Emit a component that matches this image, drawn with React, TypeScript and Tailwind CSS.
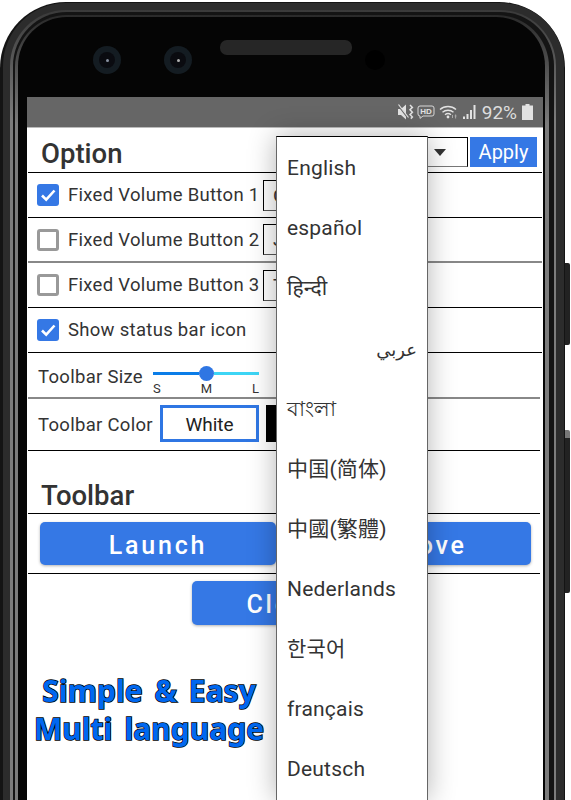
import React from "react";

const Check = () => (
  <svg width="22" height="22" viewBox="0 0 22 22" className="block">
    <path d="M5 11.5l4.2 4.2L17.5 6.5" fill="none" stroke="#fff" strokeWidth="2.6" />
  </svg>
);

function Box({ on }: { on: boolean }) {
  return on ? (
    <div className="w-[22px] h-[22px] rounded-[3px] bg-[#3578e5] shrink-0"><Check /></div>
  ) : (
    <div className="w-[22px] h-[22px] rounded-[3px] border-[3px] border-[#999] bg-white shrink-0" />
  );
}

function CheckRow({ label, on, value, cls }: { label: string; on: boolean; value?: string; cls: string }) {
  return (
    <div className={"h-[45px] mx-[1px] flex items-center pl-[9px] " + cls}>
      <Box on={on} />
      <div className="w-[204px] shrink-0 pl-[9px] pt-[2px] text-[18.5px] tracking-[0.3px] text-[#333] whitespace-nowrap">{label}</div>
      {value !== undefined && (
        <div className="w-[80px] h-[31px] border border-black border-b-[#555] pl-[9px] text-[19px] leading-[29px] text-[#333]">{value}</div>
      )}
    </div>
  );
}

const langs: { t: string; lang: string }[] = [
  { t: "English", lang: "en" },
  { t: "español", lang: "es" },
  { t: "हिन्दी", lang: "hi" },
  { t: "", lang: "ar" },
  { t: "বাংলা", lang: "bn" },
  { t: "中国(简体)", lang: "zh-CN" },
  { t: "中國(繁體)", lang: "zh-TW" },
  { t: "Nederlands", lang: "nl" },
  { t: "한국어", lang: "ko" },
  { t: "français", lang: "fr" },
  { t: "Deutsch", lang: "de" },
];

function StatusIcons() {
  return (
    <div className="h-[30px] flex items-center justify-end pr-[10px] bg-[#666] text-[#ddd]">
      <svg width="17" height="16" viewBox="0 0 17 16" className="mr-[3px]">
        <path d="M1 5h3l5-4.5v15L4 11H1z" fill="#e2e2e2" />
        <path d="M1 1l10 13" stroke="#666" strokeWidth="1.6" />
        <path d="M1.5 0.5l10 13" stroke="#e2e2e2" strokeWidth="1.2" />
        <path d="M13 1l2.4 2.4-2.4 2.4 2.4 2.4-2.4 2.4 2.4 2.4-1.6 1.6" fill="none" stroke="#e2e2e2" strokeWidth="1.5" />
      </svg>
      <svg width="18" height="14" viewBox="0 0 18 14" className="mr-[4px]">
        <path d="M3 1h12a2 2 0 012 2v6a2 2 0 01-2 2H6l-3 2.4V11a2 2 0 01-2-2V3a2 2 0 012-2z" fill="none" stroke="#d8d8d8" strokeWidth="1" />
        <text x="9" y="9" fontFamily="Liberation Sans" fontWeight="700" fontSize="8" fill="#e2e2e2" textAnchor="middle">HD</text>
      </svg>
      <svg width="20" height="15" viewBox="0 0 20 15" className="mr-[3px]">
        <path d="M1 4.5c4.4-4 11.6-4 16 0M3.5 7.2c3-2.6 8-2.6 11 0M6 9.8c1.7-1.4 4.3-1.4 6 0" fill="none" stroke="#e2e2e2" strokeWidth="1.4" />
        <circle cx="9" cy="12" r="1.4" fill="#e2e2e2" />
        <path d="M13.5 13v-3M15.7 11l1.8 0M16.6 9.5v4" stroke="#aaa" strokeWidth="1" />
      </svg>
      <svg width="15" height="16" viewBox="0 0 15 16" className="mr-[5px]">
        <path d="M1 12.5h2V15H1zM4.5 10h2v5h-2zM8 6h2v9H8zM11.5 1h2v14h-2z" fill="#e2e2e2" />
      </svg>
      <span className="text-[19px] leading-none mr-[5px]">92%</span>
      <svg width="11" height="16" viewBox="0 0 11 16">
        <path d="M3.5 0h4v1.5H11V16H0V1.5h3.5z" fill="#e2e2e2" />
      </svg>
    </div>
  );
}

export default function App() {
  return (
    <div className="relative w-[571px] h-[800px] overflow-hidden bg-white pt-[2px] flex font-['Roboto',sans-serif]">
      <div className="absolute left-[565px] top-[263px] w-[5px] h-[82px] bg-[#222] rounded-r-[2px]" />
      <div className="absolute left-[565px] top-[430px] w-[5px] h-[163px] bg-[#222] rounded-r-[2px] border-t-[8px] border-[#777]" />
      <div className="w-[565px] flex flex-col rounded-t-[66px] bg-[#141414] pl-[3px] pr-[1px] pt-[1px]">
        <div className="flex-1 flex flex-col rounded-t-[63px] bg-[#2c2c2c] pl-[7px] pr-[8px] pt-[7px]">
          <div className="flex-1 flex flex-col rounded-t-[56px] bg-[linear-gradient(#3a3a3a,#7c7c7c_110px)] pl-[3px] pr-[2px] pt-[2px]">
            <div className="flex-1 flex flex-col rounded-t-[54px] bg-[#141414] pl-[2px] pr-[5px] pt-[3px]">
              <div className="flex-1 flex flex-col rounded-t-[52px] bg-[linear-gradient(#2a2a2a,#7c7c7c_110px)] pl-[3px] pr-[4px] pt-[2px]">
                <div className="flex-1 flex flex-col rounded-t-[49px] bg-[#050505] pl-[9px] pr-[2px]">
                  {/* sensors */}
                  <div className="h-[80px] -ml-[9px] flex items-start pl-[75px] pt-[29px]">
                    <div className="w-[28px] h-[28px] rounded-full bg-[#141c22] flex items-center justify-center">
                      <div className="w-[16px] h-[16px] rounded-full bg-[#0a0b10] flex items-center justify-center">
                        <div className="w-[3px] h-[3px] rounded-full bg-[#8890a0]" />
                      </div>
                    </div>
                    <div className="w-[28px] h-[28px] rounded-full bg-[#141c22] ml-[43px] flex items-center justify-center">
                      <div className="w-[16px] h-[16px] rounded-full bg-[#0a0b10] flex items-center justify-center">
                        <div className="w-[3px] h-[3px] rounded-full bg-[#b0b0b0]" />
                      </div>
                    </div>
                    <div className="w-[132px] h-[15px] -mt-[6px] ml-[28px] rounded-[7px] bg-[#101010] bg-[radial-gradient(#262626_0.8px,transparent_0.8px)] bg-[length:2px_2px]" />
                    <div className="w-[20px] h-[20px] mt-[4px] ml-[13px] rounded-full bg-black" />
                  </div>

                  {/* screen */}
                  <div className="relative flex-1 w-[516px] bg-white overflow-hidden">
                    <StatusIcons />
                    <div className="h-[1px] bg-[#bbb]" />

                    <div className="h-[45px] mx-[1px] border-b-[1.5px] border-black flex items-start relative">
                      <div className="pl-[13px] pt-[10px] text-[27.5px] leading-[32px] font-medium text-[#333]">Option</div>
                      <div className="ml-auto mt-[9px] mr-[5px] flex">
                        <div className="w-[100px] h-[30px] border border-black border-b-[#777] flex items-center justify-end pr-[21px]">
                          <div className="w-0 h-0 border-l-[6px] border-r-[6px] border-t-[7px] border-l-transparent border-r-transparent border-t-[#333]" />
                        </div>
                        <div className="ml-[2px] w-[67px] h-[30px] bg-[#3578e5] text-white text-[20px] leading-[30px] text-center">Apply</div>
                      </div>
                    </div>

                    <CheckRow label="Fixed Volume Button 1" on value="O" cls="border-b-[1.5px] border-black" />
                    <CheckRow label="Fixed Volume Button 2" on={false} value="J" cls="border-b-[2px] border-[#888]" />
                    <CheckRow label="Fixed Volume Button 3" on={false} value="T" cls="border-b-[1.5px] border-black" />
                    <CheckRow label="Show status bar icon" on cls="border-b-[1.5px] border-black" />

                    <div className="h-[46px] ml-[1px] mr-[3px] border-b-[2px] border-[#888] flex items-start pl-[10px]">
                      <div className="w-[115px] pt-[12px] text-[18.5px] leading-[24px] tracking-[0.3px] text-[#333] whitespace-nowrap">Toolbar Size</div>
                      <div className="w-[106px] pt-[13px]">
                        <div className="flex items-center h-[15px]">
                          <div className="flex-1 h-[2.5px] bg-[#0a7de8]" />
                          <div className="w-[15px] h-[15px] rounded-full bg-[#2f76e3]" />
                          <div className="flex-1 h-[2.5px] bg-[#3dd5f5]" />
                        </div>
                        <div className="flex justify-between mt-[1px] text-[13px] leading-[14px] text-[#333]">
                          <span>S</span><span>M</span><span>L</span>
                        </div>
                      </div>
                    </div>

                    <div className="h-[52px] ml-[1px] mr-[3px] border-b-[1.5px] border-black flex items-start pl-[10px] pt-[6px]">
                      <div className="w-[122px] pt-[8px] text-[18.5px] leading-[24px] tracking-[0.3px] text-[#333] whitespace-nowrap">Toolbar Color</div>
                      <div className="w-[99px] h-[37px] border-[3px] border-[#2f76e3] text-center text-[19px] leading-[33px] text-[#222]">White</div>
                      <div className="ml-[7px] w-[60px] h-[37px] bg-black" />
                    </div>

                    <div className="h-[63px] ml-[1px] mr-[3px] border-b-[1.5px] border-black pl-[13px] pt-[29px] text-[27.5px] leading-[32px] font-medium text-[#333]">Toolbar</div>

                    <div className="h-[60px] ml-[1px] mr-[3px] border-b-[1.5px] border-black flex items-start pl-[12px] pt-[8px] gap-[19px]">
                      <div className="w-[236px] h-[43px] rounded-[5px] bg-[#3578e5] shadow-[0_1px_3px_rgba(0,0,0,0.3)] text-center text-white text-[25px] leading-[47px] font-medium tracking-[2.8px]">Launch</div>
                      <div className="w-[236px] h-[43px] rounded-[5px] bg-[#3578e5] shadow-[0_1px_3px_rgba(0,0,0,0.3)] text-center text-white text-[25px] leading-[47px] font-medium tracking-[2.8px]">Remove</div>
                    </div>

                    <div className="flex justify-center pt-[7px]">
                      <div className="w-[186px] h-[44px] rounded-[5px] bg-[#3578e5] shadow-[0_1px_3px_rgba(0,0,0,0.3)] text-center text-white text-[25px] leading-[47px] font-medium tracking-[2.8px]">Close</div>
                    </div>

                    <div className="w-[244px] mt-[47px] text-center text-[#0068f0] text-[30px] leading-[38px] font-bold [word-spacing:4px] font-['Noto_Sans',sans-serif] whitespace-nowrap [-webkit-text-stroke:1.5px_#000] [paint-order:stroke_fill]">
                      <div>Simple &amp; Easy</div>
                      <div>Multi language</div>
                    </div>

                    {/* open dropdown */}
                    <div className="absolute left-[249px] top-[39px] w-[152px] bottom-0 pt-[2px] bg-white border-[1.5px] border-b-0 border-[#666] border-t-black shadow-[0_0_26px_rgba(0,0,0,0.3)]">
                      {langs.map((l, i) =>
                        i === 3 ? (
                          <div key={i} lang="ar" className="h-[60.1px] flex items-center justify-end pr-[10px] text-[18px] text-[#333] font-['DejaVu_Sans',sans-serif]">
                            <span>عربي</span>
                          </div>
                        ) : (
                          <div key={i} lang={l.lang} className="h-[60.1px] flex items-center pl-[10px] text-[21px] text-[#333] tracking-[0.2px] font-['Roboto','Noto_Sans','Noto_Sans_CJK_SC',sans-serif]">
                            {l.t}
                          </div>
                        )
                      )}
                    </div>
                  </div>
                </div>
              </div>
            </div>
          </div>
        </div>
      </div>
    </div>
  );
}
